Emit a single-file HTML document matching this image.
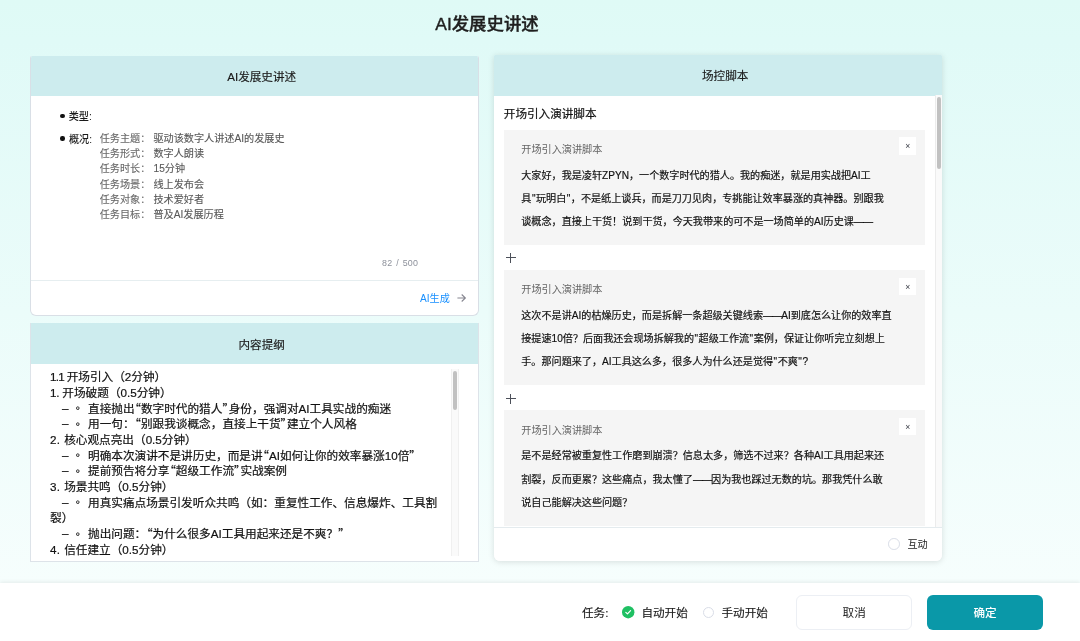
<!DOCTYPE html>
<html lang="zh-CN">
<head>
<meta charset="utf-8">
<title>AI发展史讲述</title>
<style>
*{box-sizing:border-box;margin:0;padding:0}
html,body{width:1080px;height:641px;overflow:hidden}
body{position:relative;background:linear-gradient(180deg,#dffaf6 0,#e0faf7 40px,#f6fefd 583px,#f6fefd 100%);font-family:"Liberation Sans","Noto Sans CJK SC",sans-serif;color:#1a1a1a;-webkit-font-smoothing:antialiased;text-spacing-trim:space-all;will-change:transform}
.abs{position:absolute}
.title{width:1080px;top:11px;text-align:center;font-size:17.4px;font-weight:500;-webkit-text-stroke:.4px #1f1f1f;line-height:26px;color:#1f1f1f;left:-53px}
.card{position:absolute;background:#fff;overflow:hidden}
.hd{position:absolute;left:0;top:0;right:0;height:40px;background:#cdecee;text-align:center;font-size:11.6px;line-height:41px;color:#1a1a1a;padding-left:14.5px;-webkit-text-stroke:.15px #1a1a1a}
#c1{left:30px;top:55.6px;width:448.8px;height:260.4px;border-radius:2px 2px 6px 6px;border:1px solid #d9dfe6;border-top:none}
#c2{left:30px;top:323.3px;width:448.8px;height:238.8px;border-radius:0;border:1px solid #dde3e9;border-top:none}
#c3{left:493.6px;top:55.3px;width:448.6px;height:506px;border-radius:1px 1px 6px 6px;box-shadow:0 1px 6px rgba(0,0,0,.13)}
.t10{font-size:10.15px;line-height:15.225px;white-space:nowrap}
.ol{position:absolute;left:19px;top:45.8px;font-size:11.65px;line-height:15.7px;color:#111;white-space:nowrap;-webkit-text-stroke:.2px #111}
.ol b{font-weight:normal;display:inline-block;width:26px;padding-left:12px;position:relative;top:-1px}
.ol i{font-style:normal;display:inline-block;width:12px;position:relative;top:-.5px;left:-.2px;font-size:12.6px;line-height:10px;-webkit-text-stroke:.25px #111}
.ol em{font-style:normal;letter-spacing:.4px}
q{quotes:none;font-family:"Noto Sans CJK SC",sans-serif;line-height:0}
q.l{margin-left:-5.3px}
q.r{margin-right:-5.3px}
q:before,q:after{content:none}
u{text-decoration:none;padding:0 .5px}
s{text-decoration:none;letter-spacing:-1px}
.blk{position:absolute;left:10.2px;width:421.5px;height:114.9px;background:#f5f5f5}
.blk .bt{position:absolute;left:17.5px;top:12.4px;font-size:10.15px;line-height:16px;color:#666;white-space:nowrap}
.blk .bx{position:absolute;left:395.7px;top:7.6px;width:16.8px;height:17.3px;background:#fff;text-align:center;font-size:8.6px;line-height:18.7px;color:#3c3f48;text-indent:-.4px}
.blk .bd{position:absolute;left:17.5px;top:34.2px;font-size:10.1px;line-height:23.1px;color:#111;white-space:nowrap;-webkit-text-stroke:.18px #111}
.plus{position:absolute;left:11.6px;width:11px;height:11px}
.plus:before{content:"";position:absolute;left:.5px;top:5px;width:10px;height:1px;background:#4c5059}
.plus:after{content:"";position:absolute;left:5px;top:.5px;width:1px;height:10px;background:#4c5059}
.ft{position:absolute;left:0;top:583.4px;width:1080px;height:58px;background:#fff;box-shadow:0 -1px 4px rgba(0,0,0,.08)}
.ft .tx{position:absolute;top:20.3px;font-size:11.6px;line-height:18px;color:#1a1a1a;white-space:nowrap;-webkit-text-stroke:.15px #1a1a1a}
.btn{position:absolute;top:11.6px;height:35px;width:116px;border-radius:6px;text-align:center;font-size:11.6px;line-height:35px}
</style>
</head>
<body>
<div class="abs title">AI发展史讲述</div>

<div class="card" id="c1">
  <div class="hd">AI发展史讲述</div>
  <div class="abs" style="left:29.3px;top:58.1px;width:4.4px;height:4.4px;border-radius:50%;background:#111"></div>
  <div class="abs t10" style="left:37.7px;top:53.4px;color:#1a1a1a;font-weight:500">类型:</div>
  <div class="abs" style="left:29.3px;top:80.9px;width:4.4px;height:4.4px;border-radius:50%;background:#111"></div>
  <div class="abs t10" style="left:37.9px;top:76.7px;color:#1a1a1a;font-weight:500">概况:</div>
  <div class="abs t10" style="left:68.7px;top:75.3px;color:#686868;-webkit-text-stroke:.12px #686868">任务主题：<br>任务形式：<br>任务时长：<br>任务场景：<br>任务对象：<br>任务目标：</div>
  <div class="abs t10" style="left:122.5px;top:75.3px;color:#585858;-webkit-text-stroke:.12px #585858">驱动该数字人讲述AI的发展史<br>数字人朗读<br>15分钟<br>线上发布会<br>技术爱好者<br>普及AI发展历程</div>
  <div class="abs" style="left:351px;top:201px;font-size:8.9px;line-height:12px;color:#8d919b;white-space:nowrap;word-spacing:1.2px;letter-spacing:.2px">82 / 500</div>
  <div class="abs" style="left:0;top:224px;width:449px;height:1px;background:#e6eef0"></div>
  <div class="abs" style="left:389px;top:235.6px;font-size:10.15px;line-height:16px;color:#1890ff;white-space:nowrap">AI生成</div>
  <svg class="abs" style="left:426.2px;top:237.7px" width="10" height="10" viewBox="0 0 10 10"><path d="M0.4 5H8.4M4.7 1.5L8.4 5L4.7 8.5" fill="none" stroke="#85858f" stroke-width="1.05"/></svg>
</div>

<div class="card" id="c2">
  <div class="hd" style="height:40.6px;line-height:43.2px">内容提纲</div>
  <div class="ol"><em style="letter-spacing:-.7px">1.1 </em>开场引入（2分钟）<br><em style="letter-spacing:-.2px">1. </em>开场破题（0.5分钟）<br><b>–</b><i>◦</i>直接抛出<q class="l">“</q>数字时代的猎人<q class="r">”</q>身份，强调对AI工具实战的痴迷<br><b>–</b><i>◦</i>用一句：<q class="l">“</q>别跟我谈概念，直接上干货<q class="r">”</q>建立个人风格<br><em>2. </em>核心观点亮出（0.5分钟）<br><b>–</b><i>◦</i>明确本次演讲不是讲历史，而是讲<q class="l">“</q>AI如何让你的效率暴涨10倍<q class="r">”</q><br><b>–</b><i>◦</i>提前预告将分享<q class="l">“</q>超级工作流<q class="r">”</q>实战案例<br><em>3. </em>场景共鸣（0.5分钟）<br><b>–</b><i>◦</i>用真实痛点场景引发听众共鸣（如：重复性工作、信息爆炸、工具割<br>裂）<br><b>–</b><i>◦</i>抛出问题：<q class="l">“</q>为什么很多AI工具用起来还是不爽？<q class="r">”</q><br><em>4. </em>信任建立（0.5分钟）</div>
  <div class="abs" style="left:420.3px;top:45.9px;width:7.6px;height:186.5px;background:#fafafa;border-left:1px solid #f0f0f0;border-right:1px solid #f0f0f0"></div>
  <div class="abs" style="left:422.2px;top:47.5px;width:4.1px;height:39.4px;border-radius:2px;background:#c1c1c1"></div>
</div>

<div class="card" id="c3">
  <div class="hd" style="height:40.4px;line-height:42.6px">场控脚本</div>
  <div class="abs" style="left:10.2px;top:49.6px;font-size:11.6px;line-height:18px;color:#111;white-space:nowrap;-webkit-text-stroke:.2px #111">开场引入演讲脚本</div>

  <div class="blk" style="top:74.4px">
    <div class="bt">开场引入演讲脚本</div><div class="bx">×</div>
    <div class="bd">大家好，我是凌轩ZPYN，一个数字时代的猎人。我的痴迷，就是用实战把AI工<br>具<u>"</u>玩明白<u>"</u>，不是纸上谈兵，而是刀刀见肉，专挑能让效率暴涨的真神器。别跟我<br>谈概念，直接上干货！说到干货，今天我带来的可不是一场简单的AI历史课<s>——</s></div>
  </div>
  <div class="plus" style="top:197.2px"></div>
  <div class="blk" style="top:214.7px">
    <div class="bt">开场引入演讲脚本</div><div class="bx">×</div>
    <div class="bd">这次不是讲AI的枯燥历史，而是拆解一条超级关键线索<s>——</s>AI到底怎么让你的效率直<br>接提速10倍？后面我还会现场拆解我的<u>"</u>超级工作流<u>"</u>案例，保证让你听完立刻想上<br>手。那问题来了，AI工具这么多，很多人为什么还是觉得<u>"</u>不爽<u>"</u>?</div>
  </div>
  <div class="plus" style="top:337.9px"></div>
  <div class="blk" style="top:355px;height:115.4px">
    <div class="bt">开场引入演讲脚本</div><div class="bx">×</div>
    <div class="bd">是不是经常被重复性工作磨到崩溃？信息太多，筛选不过来？各种AI工具用起来还<br>割裂，反而更累？这些痛点，我太懂了<s>——</s>因为我也踩过无数的坑。那我凭什么敢<br>说自己能解决这些问题？</div>
  </div>

  <div class="abs" style="left:441.7px;top:40px;width:7.6px;height:432px;background:#fafafa;border-left:1px solid #ececec"></div>
  <div class="abs" style="left:443.5px;top:41.7px;width:4.2px;height:71.9px;border-radius:2.1px;background:#c1c1c1"></div>

  <div class="abs" style="left:0;top:471.4px;width:449px;height:35px;background:#fff;border-top:1px solid #e4ebee"></div>
  <div class="abs" style="left:394.5px;top:483.1px;width:11.7px;height:11.7px;border-radius:50%;border:1px solid #d9dde7;background:#fff"></div>
  <div class="abs" style="left:413.8px;top:482.2px;font-size:10.15px;line-height:16px;color:#222;white-space:nowrap">互动</div>
</div>

<div class="ft">
  <div class="tx" style="left:582px">任务:</div>
  <svg class="abs" style="left:622.4px;top:22.9px" width="12.4" height="12.4" viewBox="0 0 12 12"><circle cx="6" cy="6" r="6" fill="#1fc063"/><path d="M3.7 6.1L5.3 7.7L8.3 4.5" fill="none" stroke="#fff" stroke-width="1.15" stroke-linecap="round" stroke-linejoin="round"/></svg>
  <div class="tx" style="left:641.4px">自动开始</div>
  <div class="abs" style="left:702.5px;top:23.4px;width:11.7px;height:11.7px;border-radius:50%;border:1px solid #d9dde7;background:#fff"></div>
  <div class="tx" style="left:721.5px">手动开始</div>
  <div class="btn" style="left:796.2px;background:#fff;border:1px solid #eceff4;color:#222;line-height:33px">取消</div>
  <div class="btn" style="left:927px;background:#0a98a8;color:#fff;font-weight:500">确定</div>
</div>
</body>
</html>
